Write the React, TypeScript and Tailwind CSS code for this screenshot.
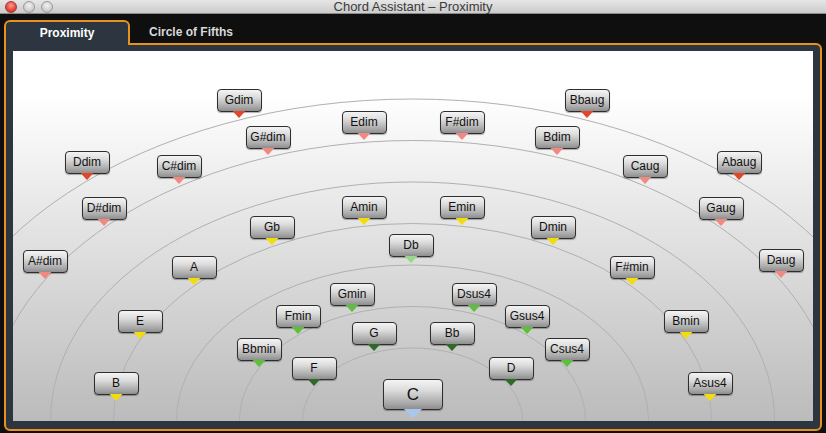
import React from 'react';

type Tone = 'red' | 'pink' | 'yellow' | 'lime' | 'green' | 'forest' | 'blue';

interface Chord {
  label: string;
  x: number; // centre of the bubble, page coords
  y: number; // top of the bubble, page coords
  tone: Tone;
}

const TONES: Record<Tone, string> = {
  red: '#e2462a',
  pink: '#f08a80',
  yellow: '#f2dc0a',
  lime: '#9ad68a',
  green: '#5dbf3a',
  forest: '#2f6a2a',
  blue: '#a9c7ee',
};

// content area origin on the page
const OX = 13;
const OY = 51;

const CHORDS: Chord[] = [
  { label: 'Gdim', x: 239, y: 89, tone: 'red' },
  { label: 'Bbaug', x: 587, y: 89, tone: 'red' },
  { label: 'Edim', x: 364, y: 111, tone: 'pink' },
  { label: 'F#dim', x: 462, y: 111, tone: 'pink' },
  { label: 'G#dim', x: 268, y: 126, tone: 'pink' },
  { label: 'Bdim', x: 557, y: 126, tone: 'pink' },
  { label: 'Ddim', x: 87, y: 151, tone: 'red' },
  { label: 'C#dim', x: 179, y: 155, tone: 'pink' },
  { label: 'Caug', x: 645, y: 155, tone: 'pink' },
  { label: 'Abaug', x: 739, y: 151, tone: 'red' },
  { label: 'D#dim', x: 104, y: 197, tone: 'pink' },
  { label: 'Gaug', x: 721, y: 197, tone: 'pink' },
  { label: 'Amin', x: 364, y: 196, tone: 'yellow' },
  { label: 'Emin', x: 462, y: 196, tone: 'yellow' },
  { label: 'Gb', x: 272, y: 216, tone: 'yellow' },
  { label: 'Dmin', x: 553, y: 216, tone: 'yellow' },
  { label: 'Db', x: 411, y: 234, tone: 'lime' },
  { label: 'A#dim', x: 45, y: 250, tone: 'pink' },
  { label: 'Daug', x: 781, y: 249, tone: 'pink' },
  { label: 'A', x: 194, y: 256, tone: 'yellow' },
  { label: 'F#min', x: 632, y: 256, tone: 'yellow' },
  { label: 'Gmin', x: 352, y: 283, tone: 'green' },
  { label: 'Dsus4', x: 474, y: 283, tone: 'green' },
  { label: 'Fmin', x: 298, y: 305, tone: 'green' },
  { label: 'Gsus4', x: 527, y: 305, tone: 'green' },
  { label: 'E', x: 140, y: 310, tone: 'yellow' },
  { label: 'Bmin', x: 686, y: 310, tone: 'yellow' },
  { label: 'G', x: 374, y: 322, tone: 'forest' },
  { label: 'Bb', x: 452, y: 322, tone: 'forest' },
  { label: 'Bbmin', x: 259, y: 338, tone: 'green' },
  { label: 'Csus4', x: 567, y: 338, tone: 'green' },
  { label: 'F', x: 314, y: 357, tone: 'forest' },
  { label: 'D', x: 511, y: 357, tone: 'forest' },
  { label: 'B', x: 116, y: 372, tone: 'yellow' },
  { label: 'Asus4', x: 710, y: 372, tone: 'yellow' },
];

const RINGS = [0, 1, 2, 3, 4, 5, 6];

const Bubble: React.FC<{ chord: Chord; big?: boolean }> = ({ chord, big }) => {
  const w = big ? 60 : 45;
  const tw = big ? 18 : 13;
  const th = big ? 9 : 7;
  return (
    <div
      className={`absolute flex items-center justify-center rounded-[4px] border border-[#2e2e2e] bg-[linear-gradient(to_bottom,#f4f4f4_0%,#dcdcdc_35%,#a9a9a9_80%,#8e8e8e_100%)] text-[#111] shadow-[0_1px_1px_rgba(0,0,0,0.3)] ${
        big ? 'h-[31px] w-[60px] text-[17px]' : 'h-[23px] w-[45px] text-[12px]'
      }`}
      style={{ left: chord.x - w / 2 - OX, top: chord.y - OY }}
    >
      <span className="-mt-[1px] leading-none">{chord.label}</span>
      <svg
        width={tw}
        height={th}
        viewBox={`0 0 ${tw} ${th}`}
        className="absolute left-1/2 top-full -translate-x-1/2"
      >
        <polygon points={`0,0 ${tw},0 ${tw / 2},${th}`} fill={TONES[chord.tone]} />
      </svg>
    </div>
  );
};

const Light: React.FC<{ red?: boolean }> = ({ red }) => (
  <span
    className={`h-[12px] w-[12px] rounded-full border ${
      red
        ? 'border-[#a83a32] bg-[radial-gradient(circle_at_50%_35%,#ff9c8e,#e0463a_60%,#b8302a)]'
        : 'border-[#9a9a9a] bg-[radial-gradient(circle_at_50%_35%,#f2f2f2,#cfcfcf_60%,#b5b5b5)]'
    }`}
  />
);

export default function App() {
  return (
    <div className="flex h-[433px] w-[826px] flex-col overflow-hidden bg-[#0f0f0f] font-['Liberation_Sans',Arial,sans-serif]">
      {/* title bar */}
      <div className="relative flex h-[14px] items-center bg-gradient-to-b from-[#e6e6e6] to-[#cbcbcb] border-b border-[#8a8a8a]">
        <div className="absolute left-[5px] top-[1px] flex gap-[6px]">
          <Light red />
          <Light />
          <Light />
        </div>
        <div className="w-full text-center text-[13px] leading-none text-[#3a3a3a]">
          Chord Assistant – Proximity
        </div>
      </div>

      {/* tabs */}
      <div className="flex h-[29px] items-start pl-[4px] pt-[6px]">
        <div className="relative z-10 flex h-[25px] w-[126px] items-center justify-center rounded-t-[6px] border-2 border-b-0 border-[#e8921e] bg-[#2d3640] pb-[2px] text-[12px] font-bold text-white">
          Proximity
        </div>
        <div className="flex h-[23px] w-[122px] items-center justify-center text-[12px] font-bold text-[#d9d9d9]">
          Circle of Fifths
        </div>
      </div>

      {/* panel */}
      <div className="mx-[4px] mb-[2px] flex flex-1 flex-col rounded-[6px] rounded-tl-none border-2 border-[#e8921e] bg-[#2d3640] px-[7px] pb-[8px] pt-[6px]">
        <div className="relative flex-1 overflow-hidden bg-[linear-gradient(to_bottom,#ffffff_12%,#bbbbbb_100%)]">
          <svg width={800} height={370} className="absolute left-0 top-0">
            {RINGS.map((k) => (
              <ellipse
                key={k}
                cx={399.5}
                cy={369.5}
                rx={110 + 63 * k}
                ry={72.5 + 41.5 * k}
                fill="none"
                stroke="#b0b0b0"
                strokeWidth={1}
              />
            ))}
          </svg>
          {CHORDS.map((c) => (
            <Bubble key={c.label} chord={c} />
          ))}
          <Bubble chord={{ label: 'C', x: 413, y: 379, tone: 'blue' }} big />
        </div>
      </div>
    </div>
  );
}
